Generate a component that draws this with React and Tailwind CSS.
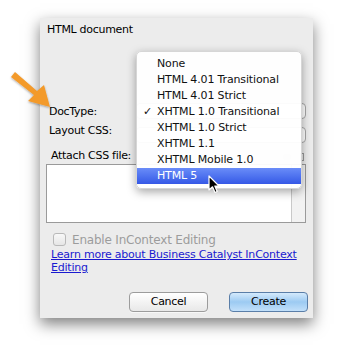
import React from "react";

const font = { fontFamily: '"DejaVu Sans", "Liberation Sans", sans-serif' };

function Arrow() {
  return (
    <svg className="absolute left-0 top-0" width="60" height="120" viewBox="0 0 60 120">
      <defs>
        <filter id="ash" x="-20%" y="-20%" width="140%" height="140%">
          <feDropShadow dx="0" dy="1" stdDeviation="1" floodColor="#000" floodOpacity="0.35" />
        </filter>
      </defs>
      <polygon
        points="11,77 15,72 37,91 44,85 50,107 28,101 34,95"
        fill="#f39a2c"
        filter="url(#ash)"
      />
    </svg>
  );
}

function Cursor() {
  return (
    <svg className="absolute" style={{ left: 208, top: 175 }} width="14" height="20" viewBox="0 0 14 20">
      <path d="M1,1 L1,15 L4.5,11.8 L7,17.5 L9.2,16.5 L6.8,11 L11,11 Z" fill="#000" stroke="#fff" strokeWidth="1.2" strokeLinejoin="round" />
    </svg>
  );
}

const items = [
  "None",
  "HTML 4.01 Transitional",
  "HTML 4.01 Strict",
  "XHTML 1.0 Transitional",
  "XHTML 1.0 Strict",
  "XHTML 1.1",
  "XHTML Mobile 1.0",
  "HTML 5",
];

function Menu() {
  return (
    <div
      className="absolute left-[136px] top-[51px] w-[166px] rounded-[5px] bg-white/95 py-[4px] shadow-[0_3px_10px_rgba(0,0,0,0.35)] border border-[#d6d6d6]"
      style={font}
    >
      {items.map((t, i) => {
        const sel = i === 7;
        return (
          <div
            key={t}
            className={
              "relative flex h-[16px] items-center pl-[20px] text-[11px] tracking-[-0.15px] " +
              (sel ? "bg-gradient-to-b from-[#6a8cf8] to-[#3658e6] text-white" : "text-[#111]")
            }
          >
            {i === 3 && <span className="absolute left-[6px] text-[11px]">✓</span>}
            {t}
          </div>
        );
      })}
    </div>
  );
}

export default function App() {
  return (
    <div className="relative h-[347px] w-[354px] overflow-hidden bg-white" style={font}>
      <div className="ml-[40px] mt-[18px] flex h-[300px] w-[273px] flex-col bg-[#ececec] shadow-[0_6px_14px_rgba(0,0,0,0.5)]">
        <div className="ml-[7px] mt-[5px] h-[13px] text-[11px] leading-[13px] tracking-[-0.3px] text-black">HTML document</div>

        <div className="mt-[67px] flex h-[16px] items-center">
          <div className="ml-[9px] text-[11px] leading-[13px] tracking-[-0.3px]">DocType:</div>
          <div className="ml-auto mr-[7px] h-[16px] w-[170px] rounded-[4px] border border-[#a5a5a5] bg-white"></div>
        </div>

        <div className="mt-[8px] flex h-[16px] items-start">
          <div className="-mt-[3px] ml-[9px] text-[11px] leading-[13px] tracking-[-0.3px]">Layout CSS:</div>
          <div className="ml-auto mr-[7px] h-[16px] w-[170px] rounded-[4px] border border-[#a5a5a5] bg-white"></div>
        </div>

        <div className="mt-[5px] flex h-[14px] items-center">
          <div className="ml-[11px] text-[11px] leading-[13px] tracking-[-0.3px]">Attach CSS file:</div>
          <div className="ml-auto mt-[4px] h-[6px] w-[8px] rounded-[2px] bg-[#d8d8d8]"></div>
          <div className="ml-[9px] mr-[9px] mt-[4px] h-[8px] w-[4px] border border-[#999] bg-[#eee]"></div>
        </div>

        <div className="ml-[6px] mr-[7px] mt-[2px] flex h-[59px] border border-[#9a9a9a] bg-white">
          <div className="flex-1"></div>
          <div className="w-[14px] border-l border-[#c9c9c9] bg-[#f2f2f2]"></div>
        </div>

        <div className="mt-[10px] flex h-[13px] items-center">
          <div className="ml-[13px] h-[13px] w-[13px] rounded-[3px] border border-[#b9b9b9] bg-gradient-to-b from-[#f8f8f8] to-[#e6e6e6]"></div>
          <div className="ml-[6px] text-[12px] leading-[14px] tracking-[-0.2px] text-[#9c9c9c]">Enable InContext Editing</div>
        </div>

        <div className="ml-[11px] mt-[2px] text-[11px] leading-[13px] tracking-[-0.22px] text-[#1a1ad0] underline">
          Learn more about Business Catalyst InContext
          <br />
          Editing
        </div>

        <div className="mt-[18px] flex h-[20px]">
          <button className="ml-[89px] h-[20px] w-[79px] rounded-[4px] border border-[#9c9c9c] bg-gradient-to-b from-white to-[#e8e8e8] text-[11px] tracking-[-0.3px] text-black shadow-[0_1px_0_rgba(255,255,255,0.6)]">
            Cancel
          </button>
          <button className="ml-[21px] h-[20px] w-[79px] rounded-[4px] border border-[#5a7ea8] bg-gradient-to-b from-[#d4eafc] via-[#9ccaf2] to-[#c2e0fa] text-[11px] tracking-[-0.3px] text-black">
            Create
          </button>
        </div>
      </div>

      <Menu />
      <Arrow />
      <Cursor />
    </div>
  );
}
